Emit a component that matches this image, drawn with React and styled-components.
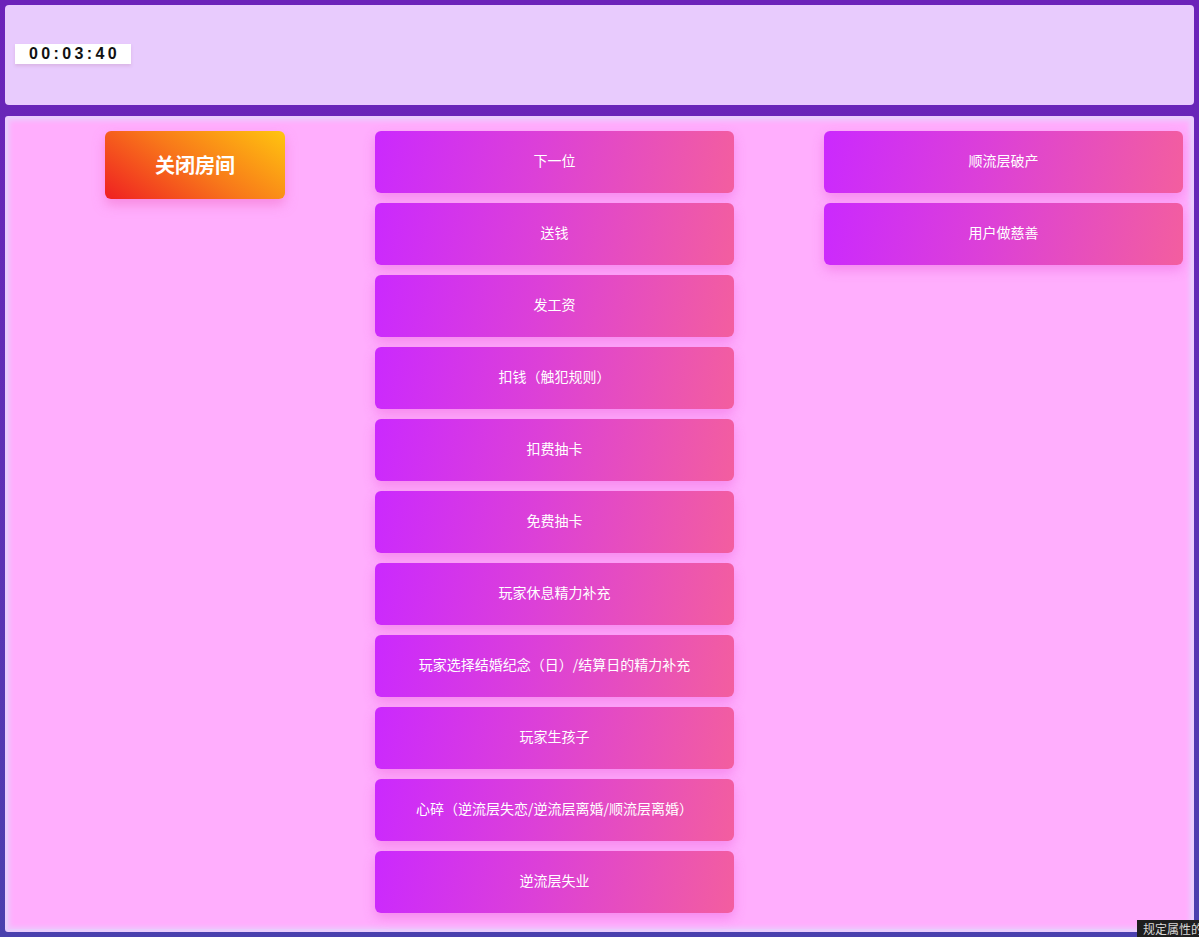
import React from "react";
import styled, { createGlobalStyle } from "styled-components";

const Global = createGlobalStyle`
  html, body { margin: 0; padding: 0; height: 100%; overflow: hidden; }
  body {
    background: linear-gradient(180deg, #6c22b9 0%, #5a33b4 60%, #4a40ae 100%);
    font-family: "Noto Sans CJK SC", "Noto Sans", sans-serif;
  }
  #root { min-height: 100vh; }
`;

const Page = styled.div`
  box-sizing: border-box;
  min-height: 100vh;
  padding: 5px;
  display: flex;
  flex-direction: column;
  gap: 11px;
`;

const Header = styled.header`
  box-sizing: border-box;
  height: 100px;
  background: #e8cbfd;
  border-radius: 4px;
  display: flex;
  align-items: center;
  padding-left: 10px;
`;

const Timer = styled.div`
  width: 116px;
  height: 20px;
  margin-top: -2px;
  background: #ffffff;
  box-shadow: 0 2px 3px rgba(180, 120, 160, 0.25);
  display: flex;
  align-items: center;
  justify-content: center;
  font-family: "Liberation Sans", Arial, sans-serif;
  font-weight: 700;
  font-size: 16px;
  letter-spacing: 3.4px;
  color: #111;
  padding-left: 3px;
  box-sizing: border-box;
`;

const Main = styled.main`
  box-sizing: border-box;
  flex: 1;
  background: #ffaefd;
  border: 3px solid #eaccfd;
  box-shadow: inset 0 0 4px 2px #eec8fd;
  border-radius: 3px;
  padding: 12px 0 16px 97px;
  display: flex;
  align-items: flex-start;
  gap: 90px;
`;

const Column = styled.div`
  display: flex;
  flex-direction: column;
  gap: 10px;
  width: ${(p) => p.$width}px;
`;

const CloseButton = styled.button`
  width: 180px;
  height: 68px;
  border: none;
  border-radius: 6px;
  background: linear-gradient(35deg, #ef1f22 0%, #f8781a 50%, #ffc50f 100%);
  box-shadow: 0 6px 12px rgba(240, 110, 200, 0.55);
  color: #fff;
  font-family: "Noto Sans CJK SC", sans-serif;
  font-weight: 700;
  font-size: 20px;
  padding: 0 0 2px;
  cursor: pointer;
`;

const ActionButton = styled.button`
  width: 359px;
  height: 62px;
  border: none;
  border-radius: 6px;
  background: linear-gradient(100deg, #cb29fe 0%, #dc40d8 45%, #f35e9f 100%);
  box-shadow: 0 5px 12px rgba(235, 90, 220, 0.45);
  color: #fff;
  font-family: "Noto Sans CJK SC", sans-serif;
  font-size: 14px;
  padding: 0 0 4px;
  cursor: pointer;
`;

const Tip = styled.div`
  position: fixed;
  right: -4px;
  bottom: 0;
  height: 17px;
  background: #1e1e1e;
  color: #d8d8d8;
  font-size: 12px;
  line-height: 17px;
  padding: 0 0 0 6px;
  white-space: nowrap;
`;

const middle = [
  "下一位",
  "送钱",
  "发工资",
  "扣钱（触犯规则）",
  "扣费抽卡",
  "免费抽卡",
  "玩家休息精力补充",
  "玩家选择结婚纪念（日）/结算日的精力补充",
  "玩家生孩子",
  "心碎（逆流层失恋/逆流层离婚/顺流层离婚）",
  "逆流层失业",
];

const right = ["顺流层破产", "用户做慈善"];

export default function App() {
  return (
    <>
      <Global />
      <Page>
        <Header>
          <Timer>00:03:40</Timer>
        </Header>
        <Main>
          <Column $width={180}>
            <CloseButton>关闭房间</CloseButton>
          </Column>
          <Column $width={359}>
            {middle.map((t) => (
              <ActionButton key={t}>{t}</ActionButton>
            ))}
          </Column>
          <Column $width={359}>
            {right.map((t) => (
              <ActionButton key={t}>{t}</ActionButton>
            ))}
          </Column>
        </Main>
      </Page>
      <Tip>规定属性的</Tip>
    </>
  );
}
